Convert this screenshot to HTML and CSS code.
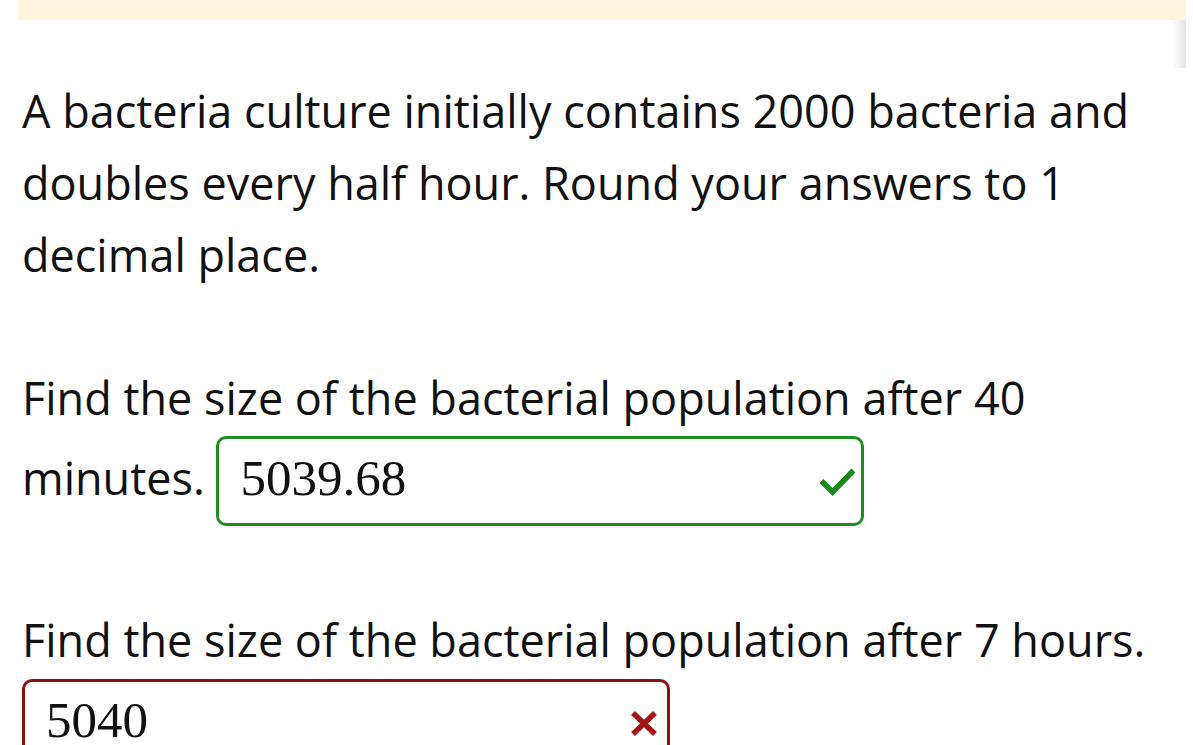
FILE: index.html
```html
<!DOCTYPE html>
<html>
<head>
<meta charset="utf-8">
<link rel="stylesheet" href="styles.css">
</head>
<body>
<div class="banner"></div>
<div class="scrollthumb"></div>
<main class="question">
  <p class="para">A bacteria culture initially contains 2000 bacteria and doubles every half hour. Round your answers to 1 decimal place.</p>
  <p class="para">Find the size of the bacterial population after 40 minutes. <span class="answer correct"><span class="value">5039.68</span><svg class="mark" viewBox="0 0 37 29" width="37" height="29"><path d="M2.5 14 L13.5 25 L34.5 3.5" fill="none" stroke="#178a17" stroke-width="5.5"/></svg></span></p>
  <p class="para">Find the size of the bacterial population after 7 hours. <span class="answer wrong"><span class="value">5040</span><svg class="mark" viewBox="0 0 28 27" width="28" height="27"><path d="M3 3 L25 24 M25 3 L3 24" fill="none" stroke="#a31414" stroke-width="5.5"/></svg></span></p>
</main>
</body>
</html>
```

FILE: styles.css
```css
html, body {
  margin: 0;
  padding: 0;
  background: #ffffff;
  overflow: hidden;
}
body {
  position: relative;
  font-family: "Open Sans", "Liberation Sans", sans-serif;
  color: #111111;
}
.banner {
  margin-left: 18px;
  width: 1168px;
  height: 20px;
  background: #fdf6dd;
}
.scrollthumb {
  position: absolute;
  left: 1172px;
  top: 20px;
  width: 14px;
  height: 48px;
  background: linear-gradient(to right, #ffffff, #e4e4e8);
}
.question {
  padding: 54.5px 30px 0 22px;
}
.para {
  margin: 0 0 71px 0;
  font-size: 45px;
  line-height: 72px;
}
.answer {
  display: inline-flex;
  align-items: center;
  justify-content: space-between;
  box-sizing: border-box;
  width: 648px;
  height: 90px;
  margin: 2.5px 0 7px 0;
  padding: 0 5px 0 21px;
  border: 3px solid;
  border-radius: 10px;
  vertical-align: baseline;
  line-height: 1;
}
.answer.correct {
  border-color: #1f8c1f;
}
.answer.wrong {
  border-color: #8e1111;
  padding-right: 9px;
}
.value {
  font-family: "Liberation Serif", "DejaVu Serif", serif;
  font-size: 51px;
  line-height: 51px;
  margin-bottom: 6px;
  color: #111111;
}
.mark {
  flex: none;
}
```
